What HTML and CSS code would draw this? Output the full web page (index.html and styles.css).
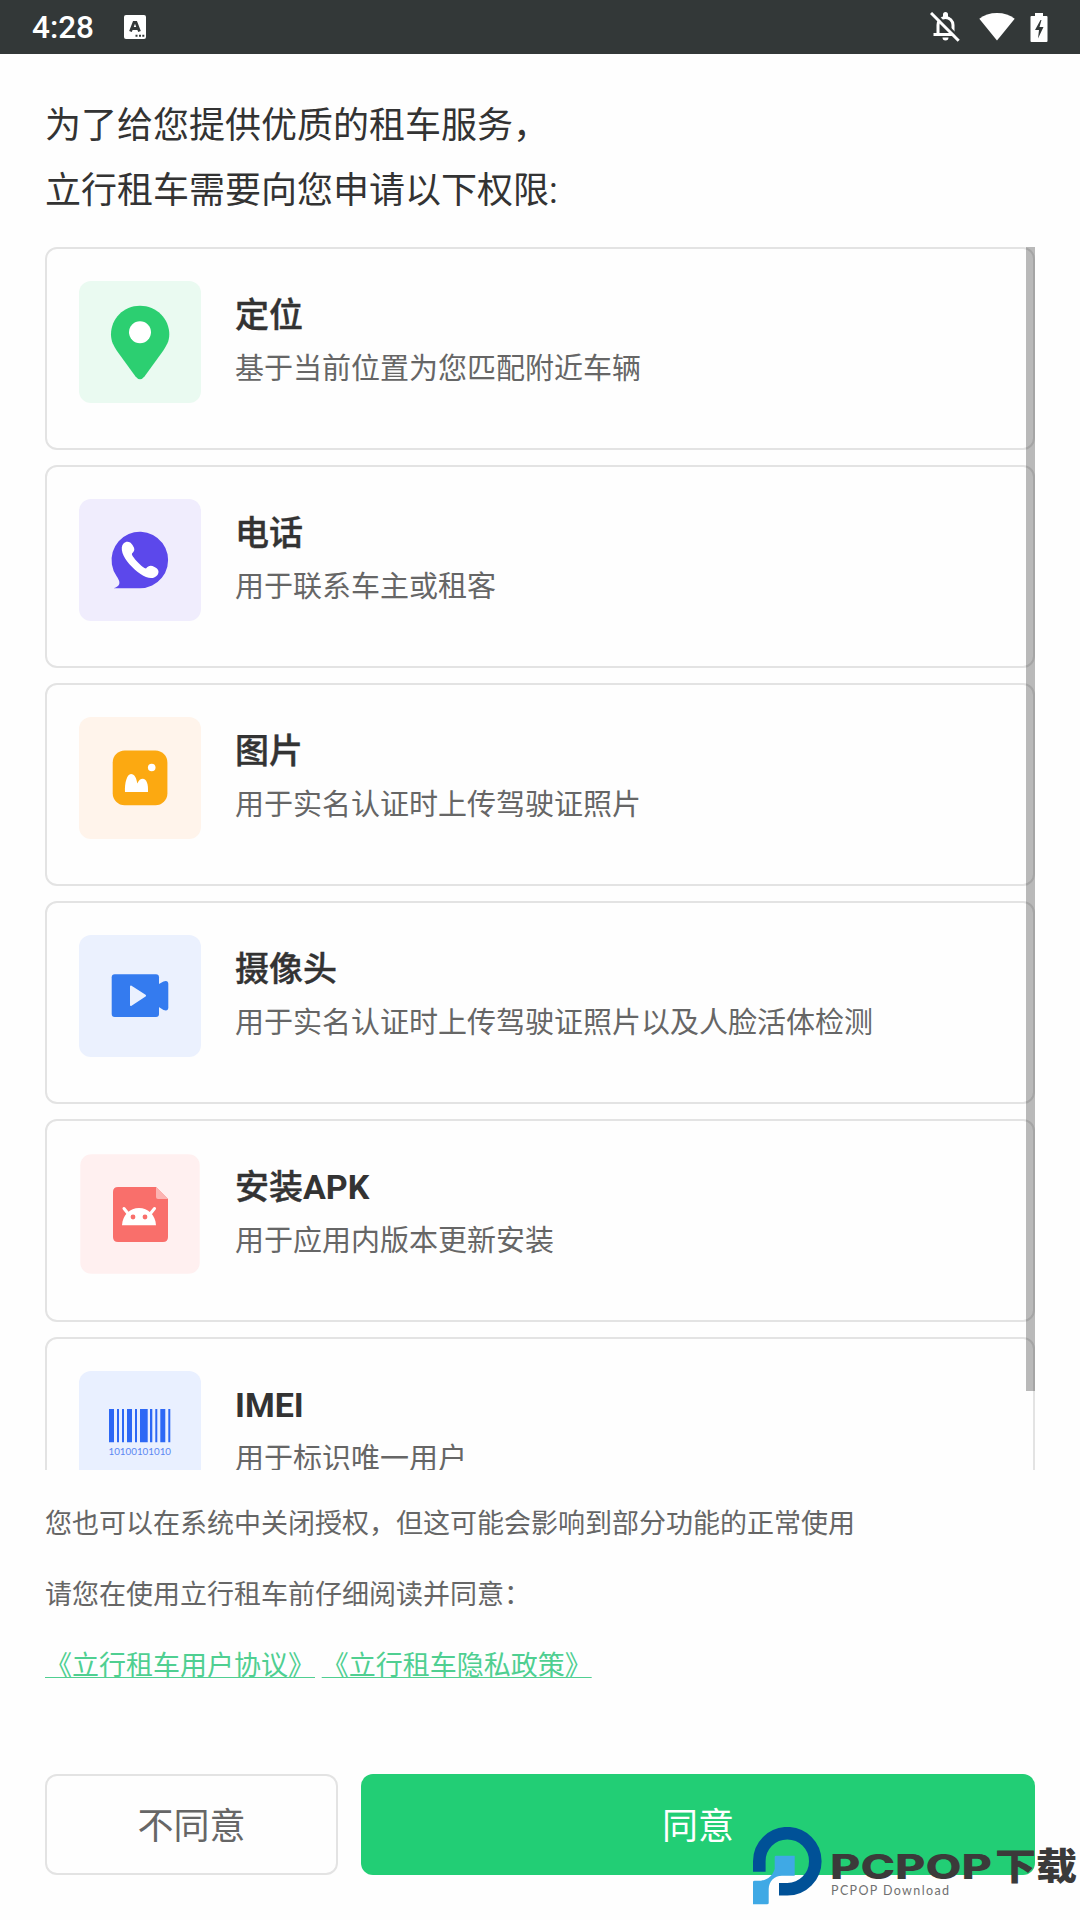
FILE: index.html
```html
<!DOCTYPE html>
<html lang="zh-CN">
<head>
  <meta charset="UTF-8" />
  <title>立行租车</title>
  <meta name="viewport" content="width=device-width, initial-scale=1" />
  <link rel="stylesheet" href="styles.css">
</head>
<body>
  <header class="status-bar">
    <span class="time">4:28</span>
    <svg class="ime" width="22" height="24" viewBox="0 0 22 24">
      <rect width="22" height="24" rx="2" fill="#fff"/>
      <path d="M6.5 16.5 L10 7.5 H12 L15.5 16.5 M8 13.5 H14" fill="none" stroke="#333838" stroke-width="2.8"/>
      <path d="M11.5 20.8h2M15 20.8h2M18.300 20.800h2" stroke="#333838" stroke-width="2"/>
    </svg>
    <div class="status-icons">
      <svg width="30" height="30" viewBox="0 0 30 30">
        <path d="M8 22.500V13a7.500 7.500 0 0 1 15 0v9.500M3.500 22.500h22" fill="none" stroke="#fff" stroke-width="3"/>
        <path d="M13 5V2.500a2.500 2.500 0 0 1 5 0V5zM12.500 25.500h6a3 3 0 0 1-6 0z" fill="#fff"/>
        <path d="M3-.5 31 27.500" stroke="#333838" stroke-width="2.500"/>
        <path d="M1 1 28.700 28.700" stroke="#fff" stroke-width="3"/>
      </svg>
      <svg class="wifi" width="36" height="28" viewBox="0 0 36 28">
        <path d="M18 27.500.300 5.800C5 2 11 0 18 0s13 2 17.700 5.800z" fill="#fff"/>
      </svg>
      <svg width="18" height="29" viewBox="0 0 18 29">
        <path d="M5 0h8v3h3.500q1 0 1 1v24q0 1-1 1h-15q-1 0-1-1V4q0-1 1-1H5z" fill="#fff"/>
        <path d="M10.500 7 5 17h4l-1 8.500L13.500 14h-4l2-7z" fill="#333838"/>
      </svg>
    </div>
  </header>

  <main class="content">
    <h1 class="heading">为了给您提供优质的租车服务，<br>立行租车需要向您申请以下权限:</h1>

    <div class="list-wrap">
      <ul class="list">
        <li class="card">
          <svg class="tile" viewBox="0 0 122 122">
            <rect width="122" height="122" rx="12" fill="#eafaf1"/>
            <path d="M61 24.700C44.500 24.700 32 37.500 32 53.500C32 60 34.500 64.500 38 70L56.500 95.500Q61 101 65.500 95.500L84 70C87.500 64.500 90.300 60 90.300 53.500C90.300 37.500 77.500 24.700 61 24.700z" fill="#2ccf71"/>
            <circle cx="61" cy="51.300" r="11" fill="#fff"/>
          </svg>
          <div class="info">
            <h2>定位</h2>
            <p>基于当前位置为您匹配附近车辆</p>
          </div>
        </li>
        <li class="card">
          <svg class="tile" viewBox="0 0 122 122">
            <rect width="122" height="122" rx="12" fill="#f0edfd"/>
            <path d="M61 89.300H34.700Q39 88 40.300 85Q41 82 37.500 77A28.300 28.300 0 1 1 61 89.300z" fill="#5c48eb"/>
            <path d="M44.500 44.500C47.500 41.500 51.500 42.500 53.500 46C56 50 56 51.500 53 54.500C51.500 56.500 64 69.500 67 69.500C69.500 66.500 72 66 75.500 68C79.500 70 80.500 72.500 78.500 76C75 80.500 68.500 80 61.500 75C53 69 46 61 43.500 54C42.300 50 42.500 46.500 44.500 44.500z" fill="#fff"/>
          </svg>
          <div class="info">
            <h2>电话</h2>
            <p>用于联系车主或租客</p>
          </div>
        </li>
        <li class="card">
          <svg class="tile" viewBox="0 0 122 122">
            <rect width="122" height="122" rx="12" fill="#fff4eb"/>
            <rect x="33.700" y="33.500" width="54.700" height="54.700" rx="12" fill="#fca911"/>
            <circle cx="72.700" cy="50.500" r="3.800" fill="#fff"/>
            <path d="M46 75C45.500 66 48 57 52 57C55.500 57 57.500 61 58.300 66.500C60 63 61.500 61.700 63.700 61.700C67.500 61.700 69.500 67 69 75z" fill="#fff"/>
          </svg>
          <div class="info">
            <h2>图片</h2>
            <p>用于实名认证时上传驾驶证照片</p>
          </div>
        </li>
        <li class="card">
          <svg class="tile" viewBox="0 0 122 122">
            <rect width="122" height="122" rx="12" fill="#ebf1fe"/>
            <rect x="32.700" y="39.300" width="47.300" height="42.700" rx="3" fill="#347bef"/>
            <path d="M79 49.500 84.500 46.500Q89.300 45 89.300 49V72.500Q89.300 76.500 84.500 75L79 71.500z" fill="#347bef"/>
            <path d="M52 51.500 66 60.700 52 70z" fill="#ebf1fe" stroke="#ebf1fe" stroke-width="2" stroke-linejoin="round"/>
          </svg>
          <div class="info">
            <h2>摄像头</h2>
            <p>用于实名认证时上传驾驶证照片以及人脸活体检测</p>
          </div>
        </li>
        <li class="card">
          <svg class="tile" viewBox="0 0 122 122">
            <rect x="1.300" y="1.300" width="119.400" height="119.400" rx="11" fill="#fff0f0"/>
            <path d="M39 34H77L89 46V84Q89 89 84 89H39Q34 89 34 84V39Q34 34 39 34z" fill="#f96f6b"/>
            <path d="M77 34 89 46H79Q77 46 77 44z" fill="#fcb4b2"/>
            <path d="M43 72.300C43.500 62 51 55 60 55S76.500 62 77 72.300z" fill="#fff"/>
            <path d="M45 55.500 49 60.500M75.500 55.500 71.500 60.500" stroke="#fff" stroke-width="3" stroke-linecap="round"/>
            <circle cx="54" cy="64" r="2.400" fill="#f96f6b"/>
            <circle cx="66" cy="64" r="2.400" fill="#f96f6b"/>
          </svg>
          <div class="info">
            <h2>安装<b>APK</b></h2>
            <p>用于应用内版本更新安装</p>
          </div>
        </li>
        <li class="card">
          <svg class="tile" viewBox="0 0 122 122">
            <rect width="122" height="122" rx="12" fill="#e9f0ff"/>
            <path d="M30 38h5v33.300h-5zM38 38h2v33.300h-2zM43 38h2v33.300h-2zM48 38h5v33.300h-5zM56 38h2v33.300h-2zM61 38h7.700v33.300h-7.700zM71 38h2.300v33.300h-2.300zM76.300 38h2v33.300h-2zM81.300 38h5v33.300h-5zM89.300 38h2v33.300h-2z" fill="#2d68f5"/>
            <text class="barcode" x="29.500" y="84" textLength="62.500" lengthAdjust="spacingAndGlyphs">10100101010</text>
          </svg>
          <div class="info">
            <h2><b>IMEI</b></h2>
            <p>用于标识唯一用户</p>
          </div>
        </li>
      </ul>
      <div class="scrollbar"></div>
    </div>

    <div class="notes">
      <p>您也可以在系统中关闭授权，但这可能会影响到部分功能的正常使用</p>
      <p>请您在使用立行租车前仔细阅读并同意：</p>
      <p><a href="#">《立行租车用户协议》</a> <a href="#">《立行租车隐私政策》</a></p>
    </div>

    <div class="actions">
      <button class="btn decline">不同意</button>
      <button class="btn agree">同意</button>
    </div>
  </main>

  <svg class="watermark" width="327" height="80" viewBox="0 0 327 80">
    <path d="M6.300 44.700V34.200A28 28 0 1 1 34.300 62.200H26" fill="none" stroke="#005197" stroke-width="12.600"/>
    <path d="M23 28.700H41.700V48.700H29C21 49 16 54 15.700 62V76Q15.700 77.300 14 77.300H0V55Q0 53.700 1.500 53.700H8C15 53 20 48 21.700 42V30Q21.700 28.700 23 28.700z" fill="#3fa9e5"/>
    <text class="brand" x="77" y="51.500" textLength="162" lengthAdjust="spacingAndGlyphs">PCPOP</text>
    <text class="brand-cn" x="242" y="52.500" textLength="82" lengthAdjust="spacingAndGlyphs">下载</text>
    <text class="brand-sub" x="78" y="68" textLength="118">PCPOP Download</text>
  </svg>
</body>
</html>
```
FILE: styles.css
```css
* {
  box-sizing: border-box;
}
body {
  margin: 0;
  height: 1920px;
  position: relative;
  overflow: hidden;
  background: #fefefe;
  color: #333;
  font-family: Roboto, "Noto Sans CJK SC", sans-serif;
}
h1, h2, p, ul {
  margin: 0;
  padding: 0;
  font-weight: 400;
}
.status-bar {
  display: flex;
  align-items: center;
  height: 54px;
  padding: 0 32px;
  background: #333838;
  color: #fff;
}
.time {
  width: 92px;
  padding-top: 2px;
  font-size: 31.5px;
  font-weight: 500;
  line-height: 52px;
}
.status-icons {
  display: flex;
  align-items: center;
  margin-left: auto;
}
.wifi {
  margin: 0 15px 0 19px;
}
.content {
  padding: 40px 45px 0;
}
.heading {
  font-size: 36px;
  line-height: 65px;
  margin-bottom: 23px;
}

/* permission list */
.list-wrap {
  position: relative;
  height: 1223px;
  overflow: hidden;
}
.list {
  display: flex;
  flex-direction: column;
  gap: 15px;
  list-style: none;
}
.card {
  display: flex;
  flex: none;
  height: 203px;
  padding: 32px;
  border: 2px solid #e3e3e3;
  border-radius: 12px;
}
.tile {
  width: 122px;
  height: 122px;
  margin-right: 34px;
}
.info {
  padding-top: 7px;
}
.info h2 {
  font-size: 34px;
  font-weight: 500;
  line-height: 54px;
  -webkit-text-stroke: 0.4px #333;
}
.info b {
  font-weight: 700;
  -webkit-text-stroke: 0;
}
.info p {
  font-size: 29px;
  line-height: 54px;
  color: #666;
}
.barcode {
  font-family: Lato, sans-serif;
  font-size: 10px;
  fill: #5b87f2;
}
.scrollbar {
  position: absolute;
  top: 0;
  right: 0;
  width: 9px;
  height: 1144px;
  background: rgba(0, 0, 0, 0.27);
}

.notes {
  margin-top: 19px;
  font-size: 27px;
  line-height: 71px;
  color: #666;
}
.notes a {
  color: #4fcf91;
  text-decoration: underline;
  text-decoration-thickness: 1px;
  text-underline-offset: 2px;
}
.actions {
  display: flex;
  gap: 23px;
  margin-top: 72px;
}
.btn {
  height: 101px;
  padding: 0 0 4px;
  border: none;
  border-radius: 12px;
  font-family: inherit;
  font-size: 36px;
}
.decline {
  width: 293px;
  border: 2px solid #e3e3e3;
  background: #fefefe;
  color: #666;
}
.agree {
  flex: 1;
  background: #22ce75;
  color: #fff;
}

/* logo over the bottom right corner */
.watermark {
  position: absolute;
  left: 753px;
  top: 1827px;
}
.brand {
  font-family: Inter, sans-serif;
  font-size: 34px;
  font-weight: 800;
  fill: #3b3a3a;
}
.brand-cn {
  font-family: "Noto Sans CJK SC", sans-serif;
  font-size: 37px;
  font-weight: 900;
  fill: #3b3a3a;
}
.brand-sub {
  font-family: Lato, sans-serif;
  font-size: 12.5px;
  fill: #707070;
}
```
